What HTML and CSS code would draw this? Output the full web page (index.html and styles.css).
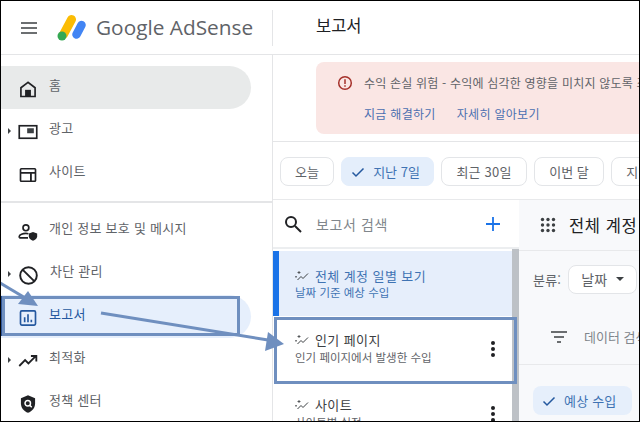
FILE: index.html
```html
<!DOCTYPE html>
<html lang="ko">
<head>
<meta charset="utf-8">
<title>Google AdSense 보고서</title>
<link rel="stylesheet" href="styles.css">
</head>
<body>
<div class="frame">
  <header class="topbar">
    <div class="brand">
      <svg class="menu-icon" width="18" height="12" viewBox="0 0 18 12"><path d="M1 1h16M1 6h16M1 11h16" stroke="#3c4043" stroke-width="1.7"/></svg>
      <svg class="logo" width="30" height="28" viewBox="0 0 30 28"><path d="M6.5 20.5 14.500 5.500" stroke="#fbbc04" stroke-width="9" stroke-linecap="round"/><path d="M19.500 20.500 24.500 11" stroke="#4285f4" stroke-width="8.500" stroke-linecap="round"/><circle cx="5" cy="22" r="4.500" fill="#34a853"/></svg>
      <span class="wordmark">Google AdSense</span>
    </div>
    <h1 class="page-title">보고서</h1>
  </header>
  <div class="content">
    <nav class="sidebar">
      <div class="nav-group">
        <a class="nav-item home"><span class="caret-slot"></span>
          <svg class="nav-icon" viewBox="0 0 24 24"><path d="M12 4 3.500 10.500V21h17V10.500z" fill="none" stroke="#202124" stroke-width="2"/><rect x="8.500" y="13" width="7" height="8" fill="#202124"/></svg>
          <span class="nav-text">홈</span></a>
        <a class="nav-item"><span class="caret-slot"><i class="caret"></i></span>
          <svg class="nav-icon" viewBox="0 0 24 24"><rect x="1.500" y="4.500" width="21" height="15" fill="none" stroke="#202124" stroke-width="2"/><rect x="11" y="7.500" width="8" height="6" fill="#3c4043"/></svg>
          <span class="nav-text">광고</span></a>
        <a class="nav-item"><span class="caret-slot"></span>
          <svg class="nav-icon" viewBox="0 0 24 24"><rect x="3" y="4.500" width="18" height="15" rx="1" fill="none" stroke="#202124" stroke-width="2"/><path d="M3 9.500h18M15.500 9.500v10" stroke="#202124" stroke-width="2.200"/></svg>
          <span class="nav-text">사이트</span></a>
      </div>
      <div class="nav-group second">
        <a class="nav-item"><span class="caret-slot"></span>
          <svg class="nav-icon" viewBox="0 0 24 24"><circle cx="9.500" cy="7" r="3.500" fill="none" stroke="#202124" stroke-width="2"/><path d="M1.500 19v-1.500c0-2.500 4.500-3.800 8-3.800 1 0 2 .1 3 .4M1.500 19H12" fill="none" stroke="#202124" stroke-width="2"/><path d="M18 12l5 1.900v3.300c0 2.700-2.200 4.600-5 5.300-2.800-.7-5-2.600-5-5.300v-3.300z" fill="#202124"/></svg>
          <span class="nav-text">개인 정보 보호 및 메시지</span></a>
        <a class="nav-item"><span class="caret-slot"><i class="caret"></i></span>
          <svg class="nav-icon big" viewBox="0 0 24 24"><circle cx="12" cy="12" r="9.500" fill="none" stroke="#202124" stroke-width="2.200"/><path d="M5.500 5.500l13 13" stroke="#202124" stroke-width="2.200"/></svg>
          <span class="nav-text">차단 관리</span></a>
        <a class="nav-item active"><span class="caret-slot"></span>
          <svg class="nav-icon" viewBox="0 0 24 24"><rect x="3" y="3.500" width="18" height="17" rx="1.500" fill="none" stroke="#24589f" stroke-width="2"/><path d="M8 17v-6M12 17V7.500M16 17v-3" stroke="#24589f" stroke-width="2"/></svg>
          <span class="nav-text">보고서</span></a>
        <a class="nav-item"><span class="caret-slot"><i class="caret"></i></span>
          <svg class="nav-icon" viewBox="0 0 24 24"><path d="M1.500 18 8.500 11l4 4 8.500-8.500M15.500 6H22v6.500" fill="none" stroke="#202124" stroke-width="2.200"/></svg>
          <span class="nav-text">최적화</span></a>
        <a class="nav-item"><span class="caret-slot"></span>
          <svg class="nav-icon" viewBox="0 0 24 24"><path d="M12 1.500 20.500 5v6c0 5.500-3.500 9.700-8.500 11.500C7 20.700 3.500 16.500 3.500 11V5z" fill="#202124"/><circle cx="11.700" cy="11" r="3.300" fill="none" stroke="#fff" stroke-width="1.800"/><path d="M14 13.500l2.500 2.500" stroke="#fff" stroke-width="1.800"/></svg>
          <span class="nav-text">정책 센터</span></a>
      </div>
    </nav>
    <main class="main">
      <section class="alert-wrap">
        <div class="alert">
          <div class="alert-line">
            <svg width="16" height="16" viewBox="0 0 16 16"><circle cx="8" cy="8" r="6.300" fill="none" stroke="#a5312b" stroke-width="1.500"/><path d="M8 4.300v4.700M8 10.300v1.500" stroke="#a5312b" stroke-width="1.500"/></svg>
            <span>수익 손실 위험 - 수익에 심각한 영향을 미치지 않도록 조치하세요.</span>
          </div>
          <div class="alert-links"><a>지금 해결하기</a><a>자세히 알아보기</a></div>
        </div>
      </section>
      <section class="chips">
        <span class="chip w-today">오늘</span>
        <span class="chip selected w-week"><svg width="14" height="14" viewBox="0 0 14 14"><path d="M1.500 7.500 5 11l7.500-7.500" fill="none" stroke="#24589f" stroke-width="1.500"/></svg>지난 7일</span>
        <span class="chip w-month">최근 30일</span>
        <span class="chip w-cur">이번 달</span>
        <span class="chip w-last">지난 달</span>
      </section>
      <section class="workspace">
        <div class="reports">
          <div class="search">
            <svg width="20" height="20" viewBox="0 0 20 20"><circle cx="8" cy="8" r="5" fill="none" stroke="#202124" stroke-width="2"/><path d="M12 12l6 6" stroke="#202124" stroke-width="2"/></svg>
            <span class="search-text">보고서 검색</span>
            <svg class="plus" width="16" height="16" viewBox="0 0 16 16"><path d="M8 1v14M1 8h14" stroke="#1a73e8" stroke-width="1.800"/></svg>
          </div>
          <div class="report-list">
            <div class="report selected">
              <div class="report-title"><svg class="spark" width="14" height="12" viewBox="0 0 14 12"><path d="M2.500 10 6 6.500 8 8.500 13 3.500" fill="none" stroke="#3c4043" stroke-width="1"/><path d="M4 1v3M2.500 2.500h3M1 6v1.500M.3 6.800h1.500" stroke="#3c4043" stroke-width=".8"/></svg>전체 계정 일별 보기</div>
              <div class="report-sub">날짜 기준 예상 수입</div>
            </div>
            <div class="report">
              <div class="report-title"><svg class="spark" width="14" height="12" viewBox="0 0 14 12"><path d="M2.500 10 6 6.500 8 8.500 13 3.500" fill="none" stroke="#3c4043" stroke-width="1"/><path d="M4 1v3M2.500 2.500h3M1 6v1.500M.3 6.800h1.500" stroke="#3c4043" stroke-width=".8"/></svg>인기 페이지</div>
              <div class="report-sub">인기 페이지에서 발생한 수입</div>
              <i class="dots"></i>
            </div>
            <div class="report">
              <div class="report-title"><svg class="spark" width="14" height="12" viewBox="0 0 14 12"><path d="M2.500 10 6 6.500 8 8.500 13 3.500" fill="none" stroke="#3c4043" stroke-width="1"/><path d="M4 1v3M2.500 2.500h3M1 6v1.500M.3 6.800h1.500" stroke="#3c4043" stroke-width=".8"/></svg>사이트</div>
              <div class="report-sub">사이트별 실적</div>
              <i class="dots"></i>
            </div>
          </div>
        </div>
        <div class="detail">
          <div class="detail-head">
            <svg width="16" height="16" viewBox="0 0 16 16" fill="#3c4043"><circle cx="2.500" cy="2.500" r="1.700"/><circle cx="8" cy="2.500" r="1.700"/><circle cx="13.500" cy="2.500" r="1.700"/><circle cx="2.500" cy="8" r="1.700"/><circle cx="8" cy="8" r="1.700"/><circle cx="13.500" cy="8" r="1.700"/><circle cx="2.500" cy="13.500" r="1.700"/><circle cx="8" cy="13.500" r="1.700"/><circle cx="13.500" cy="13.500" r="1.700"/></svg>
            <span class="detail-title">전체 계정 일별 보기</span>
          </div>
          <div class="split-row">
            <span class="split-label">분류:</span>
            <span class="split-select">날짜<i class="drop"></i></span>
          </div>
          <div class="filter-row">
            <svg class="filter-icon" width="16" height="12" viewBox="0 0 16 12"><path d="M0 1h16M3 6h10M6 11h4" stroke="#3c4043" stroke-width="1.600"/></svg>
            <span class="filter-text">데이터 검색</span>
          </div>
          <div class="metric-row">
            <span class="metric"><svg width="14" height="14" viewBox="0 0 14 14"><path d="M1.500 7.500 5 11l7.500-7.500" fill="none" stroke="#24589f" stroke-width="1.500"/></svg>예상 수입</span>
          </div>
        </div>
      </section>
    </main>
    <svg class="annotations" width="640" height="422" viewBox="0 0 640 422">
      <rect x="0" y="296" width="3" height="40" fill="#2f5597"/>
      <rect x="3.500" y="297.500" width="235" height="37" fill="none" stroke="#6f8fbf" stroke-width="3"/>
      <rect x="275.500" y="318.500" width="240" height="64" fill="none" stroke="#6f8fbf" stroke-width="3"/>
      <path d="M0 283 27 299" stroke="#6f8fbf" stroke-width="3"/>
      <path d="M38 306 18 304 28 291z" fill="#6f8fbf"/>
      <path d="M101 313 268 340" stroke="#6f8fbf" stroke-width="3"/>
      <path d="M284 344 265 351 268 332z" fill="#6f8fbf"/>
    </svg>
  </div>
</div>
</body>
</html>
```
FILE: styles.css
```css
* { box-sizing: border-box; }
html, body { margin: 0; padding: 0; }
body {
  width: 640px;
  height: 422px;
  overflow: hidden;
  font-family: "Noto Sans CJK KR", "Noto Sans", sans-serif;
  color: #5f6368;
  background: #fff;
}
a { color: inherit; text-decoration: none; }
.frame {
  position: relative;
  width: 640px;
  height: 422px;
  border: 1px solid #000;
  overflow: hidden;
  display: flex;
  flex-direction: column;
}
.topbar {
  height: 54px;
  flex: none;
  display: flex;
  align-items: center;
  border-bottom: 1px solid #e4e5e7;
}
.brand {
  width: 272px;
  height: 36px;
  display: flex;
  align-items: center;
  border-right: 1px solid #e4e5e7;
  padding-left: 19px;
}
.menu-icon { flex: none; }
.logo { margin-left: 19px; flex: none; }
.wordmark {
  margin-left: 9px;
  margin-bottom: 2px;
  font-family: "Open Sans", Roboto, sans-serif;
  font-size: 20.8px;
  color: #5f6368;
  white-space: nowrap;
}
.page-title {
  margin: 0 0 5px 43px;
  font-size: 16.500px;
  line-height: 20px;
  font-weight: 400;
  color: #202124;
}
.content {
  flex: 1;
  min-height: 0;
  display: flex;
}
.sidebar {
  width: 272px;
  flex: none;
  border-right: 1px solid #e4e5e7;
}
.nav-group { padding-top: 11px; padding-bottom: 6px; border-bottom: 2px solid #e4e5e7; }
.nav-group.second { border-bottom: 0; padding-top: 6px; padding-bottom: 0; }
.nav-item {
  height: 43px;
  width: 250px;
  display: flex;
  align-items: center;
  border-radius: 0 22px 22px 0;
  font-size: 13px;
  color: #5f6368;
}
.nav-item.home { background: #e8eaea; }
.nav-item.active { background: #e6effc; color: #24589f; }
.caret-slot { width: 17px; flex: none; display: flex; padding-left: 7px; }
.caret {
  width: 0;
  height: 0;
  border-left: 3px solid #3c4043;
  border-top: 3px solid transparent;
  border-bottom: 3px solid transparent;
}
.nav-icon { width: 20px; height: 20px; flex: none; margin-top: 3px; }
.nav-icon.big { width: 21px; height: 21px; }
.nav-text { margin-left: 11px; letter-spacing: .25px; white-space: nowrap; line-height: 16px; margin-bottom: 6px; }
.main {
  flex: 1;
  min-width: 0;
  display: flex;
  flex-direction: column;
}
.alert-wrap {
  height: 87px;
  flex: none;
  padding: 7px 0 0 43px;
  border-bottom: 1px solid #e4e5e7;
}
.alert {
  width: 360px;
  height: 72px;
  background: #fae6e4;
  border-radius: 8px 0 0 8px;
  padding: 13px 0 0 21px;
  overflow: hidden;
}
.alert-line {
  display: flex;
  align-items: center;
  gap: 11px;
  font-size: 12px;
  letter-spacing: .2px;
  line-height: 16px;
  white-space: nowrap;
  color: #5f6368;
}
.alert-line svg { flex: none; }
.alert-links {
  display: flex;
  gap: 21px;
  margin: 15px 0 0 27px;
  font-size: 12px;
  letter-spacing: .3px;
  line-height: 16px;
  color: #4a6fb0;
}
.chips {
  height: 58px;
  flex: none;
  display: flex;
  gap: 7px;
  padding: 15px 0 0 7px;
  overflow: hidden;
  border-bottom: 1px solid #e8e9eb;
}
.chip {
  flex: none;
  height: 29px;
  border: 1px solid #e3e5e8;
  border-radius: 8px;
  display: flex;
  align-items: center;
  justify-content: center;
  font-size: 13px;
  color: #5f6368;
  white-space: nowrap;
}
.chip.selected { background: #e4eefb; border-color: #e4eefb; color: #3f73b3; gap: 8px; padding-right: 4px; }
.w-today { width: 54px; }
.w-week { width: 93px; }
.w-month { width: 86px; letter-spacing: .2px; }
.w-cur { width: 70px; }
.w-last { width: 70px; }
.workspace {
  flex: 1;
  min-height: 0;
  display: flex;
}
.reports {
  width: 246px;
  flex: none;
  display: flex;
  flex-direction: column;
}
.search {
  height: 49px;
  flex: none;
  display: flex;
  align-items: center;
  padding: 0 18px 0 10px;
  border-bottom: 2px solid #eceef0;
}
.search-text { margin-left: 13px; font-size: 14px; letter-spacing: .6px; color: #80868b; }
.plus { margin-left: auto; }
.report-list {
  flex: 1;
  min-height: 0;
  border-right: 7px solid #bdc1c6;
  padding-top: 2px;
  overflow: hidden;
}
.report {
  position: relative;
  height: 65px;
  padding: 15px 0 0 22px;
}
.report.selected {
  padding-top: 16px;
  padding-left: 16px;
  background: #e6eefb;
  border-left: 6px solid #1a73e8;
}
.report-title {
  display: flex;
  align-items: center;
  gap: 6px;
  font-size: 13px;
  letter-spacing: .4px;
  line-height: 18px;
  color: #3c4043;
  white-space: nowrap;
}
.selected .report-title, .selected .report-sub { color: #3f73b3; }
.report-sub {
  font-size: 11.500px;
  line-height: 15px;
  margin-top: 1px;
  color: #5f6368;
  white-space: nowrap;
}
.selected .report-sub { margin-top: 0; }
.dots {
  position: absolute;
  left: 218px;
  top: 25px;
  width: 4px;
  height: 4px;
  border-radius: 50%;
  background: #202124;
  box-shadow: 0 6px 0 #202124, 0 12px 0 #202124;
}
.detail {
  flex: 1;
  min-width: 0;
  background: #f8f9fb;
  overflow: hidden;
}
.detail-head {
  height: 51px;
  display: flex;
  align-items: center;
  gap: 13px;
  padding-left: 21px;
  border-bottom: 1px solid #e8e9eb;
}
.detail-head svg { flex: none; }
.detail-title { font-size: 16.500px; letter-spacing: .6px; color: #202124; white-space: nowrap; }
.split-row {
  height: 58px;
  display: flex;
  align-items: center;
  gap: 7px;
  padding: 0 0 2px 14px;
}
.split-label { font-size: 13px; letter-spacing: .2px; color: #5f6368; white-space: nowrap; }
.split-select {
  flex: none;
  width: 69px;
  height: 29px;
  background: #fff;
  border: 1px solid #e3e5e8;
  border-radius: 8px;
  display: flex;
  align-items: center;
  justify-content: center;
  gap: 9px;
  font-size: 14px;
  color: #5f6368;
}
.drop {
  width: 0;
  height: 0;
  border-top: 4px solid #3c4043;
  border-left: 4px solid transparent;
  border-right: 4px solid transparent;
}
.filter-row {
  height: 56px;
  display: flex;
  align-items: center;
  gap: 17px;
  padding-left: 32px;
  border-bottom: 1px solid #e8e9eb;
}
.filter-icon { flex: none; }
.filter-text { flex: none; font-size: 13px; color: #80868b; white-space: nowrap; }
.metric-row { padding: 21px 0 0 14px; }
.metric {
  width: 99px;
  height: 29px;
  border-radius: 8px;
  background: #e6effb;
  display: flex;
  align-items: center;
  gap: 8px;
  padding-left: 9px;
  font-size: 13px;
  letter-spacing: .2px;
  color: #3f73b3;
}
.annotations {
  position: absolute;
  left: -1px;
  top: -1px;
  pointer-events: none;
}
```
